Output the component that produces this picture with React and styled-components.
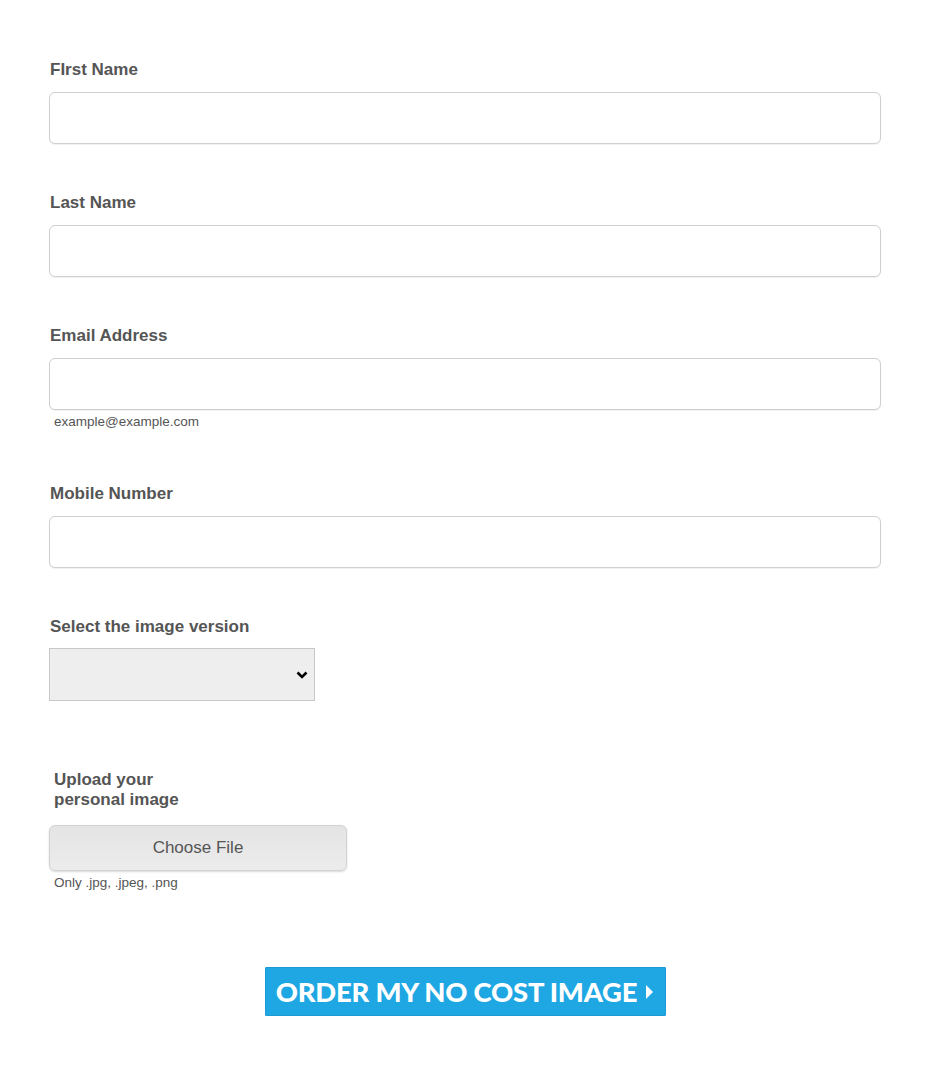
import React from "react";
import styled, { createGlobalStyle } from "styled-components";

const Global = createGlobalStyle`
  html, body { margin: 0; padding: 0; background: #fff; }
  body { font-family: "Liberation Sans", Arial, sans-serif; }
`;

const Form = styled.form`
  width: 832px;
  padding: 59px 0 40px 49px;
  display: flex;
  flex-direction: column;
`;

const Field = styled.div`
  display: flex;
  flex-direction: column;
  align-items: flex-start;
  margin-bottom: ${(p) => p.$mb ?? 48}px;
`;

const Label = styled.label`
  font-size: 17px;
  font-weight: 700;
  line-height: 20px;
  color: #555;
  padding-top: 1px;
  margin-bottom: ${(p) => p.$mb ?? 12}px;
  padding-left: ${(p) => (p.$indent ? 5 : 1)}px;
  ${(p) => p.$narrow && "width: 160px;"}
`;

const Input = styled.input`
  box-sizing: border-box;
  width: 832px;
  height: 52px;
  border: 1px solid #cfcfcf;
  border-radius: 6px;
  box-shadow: 0 1px 1px rgba(0, 0, 0, 0.06);
  background: #fff;
  padding: 0 12px;
  font-size: 16px;
  font-family: inherit;
  outline: none;
`;

const Hint = styled.span`
  font-size: 13.5px;
  line-height: 16px;
  color: #555;
  margin-top: ${(p) => p.$mt ?? 4}px;
  padding-left: 5px;
`;

const SelectWrap = styled.div`
  position: relative;
  width: 266px;
  height: 53px;
`;

const Select = styled.select`
  box-sizing: border-box;
  appearance: none;
  -webkit-appearance: none;
  width: 100%;
  height: 100%;
  background: #eee;
  border: 1px solid #c8c8c8;
  border-radius: 0;
  font-size: 16px;
  font-family: inherit;
  color: #333;
  outline: none;
  padding: 0 30px 0 8px;
`;

const Chevron = styled.svg`
  position: absolute;
  right: 7px;
  top: 50%;
  margin-top: -4px;
  pointer-events: none;
`;

const FileButton = styled.label`
  box-sizing: border-box;
  width: 298px;
  height: 46px;
  display: flex;
  align-items: center;
  justify-content: center;
  border: 1px solid #d2d2d2;
  border-radius: 6px;
  background: linear-gradient(#e4e4e4, #ececec);
  box-shadow: 0 1px 2px rgba(0, 0, 0, 0.15);
  color: #555;
  font-size: 17px;
  cursor: pointer;
  input { display: none; }
`;

const SubmitRow = styled.div`
  display: flex;
  justify-content: center;
  margin-top: 76px;
`;

const Submit = styled.button`
  box-sizing: border-box;
  width: 401px;
  height: 49px;
  background: #1fa7e3;
  border: 1px solid #1b9ad4;
  border-radius: 1px;
  color: #fff;
  font-family: Lato, "Open Sans", sans-serif;
  font-weight: 900;
  font-size: 27.4px;
  letter-spacing: -0.2px;
  display: flex;
  align-items: center;
  justify-content: center;
  gap: 8px;
  padding: 0;
  cursor: pointer;
`;

export default function App() {
  return (
    <>
      <Global />
      <Form onSubmit={(e) => e.preventDefault()}>
        <Field>
          <Label>FIrst Name</Label>
          <Input type="text" />
        </Field>
        <Field>
          <Label>Last Name</Label>
          <Input type="text" />
        </Field>
        <Field $mb={53}>
          <Label>Email Address</Label>
          <Input type="email" />
          <Hint $mt={4}>example@example.com</Hint>
        </Field>
        <Field $mb={48}>
          <Label>Mobile Number</Label>
          <Input type="tel" />
        </Field>
        <Field $mb={68}>
          <Label $mb={11}>Select the image version</Label>
          <SelectWrap>
            <Select defaultValue="">
              <option value=""></option>
            </Select>
            <Chevron width="12" height="8" viewBox="0 0 12 8">
              <path d="M1.5 1.5 L6 6 L10.5 1.5" fill="none" stroke="#000" strokeWidth="2.6" />
            </Chevron>
          </SelectWrap>
        </Field>
        <Field $mb={0}>
          <Label $indent $narrow $mb={15}>Upload your personal image</Label>
          <FileButton>
            Choose File
            <input type="file" accept=".jpg,.jpeg,.png" />
          </FileButton>
          <Hint $mt={4}>Only .jpg, .jpeg, .png</Hint>
        </Field>
        <SubmitRow>
          <Submit type="submit">
            ORDER MY NO COST IMAGE
            <svg width="9" height="16" viewBox="0 0 9 16">
              <path d="M1 1 L8 8 L1 15 Z" fill="#fff" />
            </svg>
          </Submit>
        </SubmitRow>
      </Form>
    </>
  );
}
